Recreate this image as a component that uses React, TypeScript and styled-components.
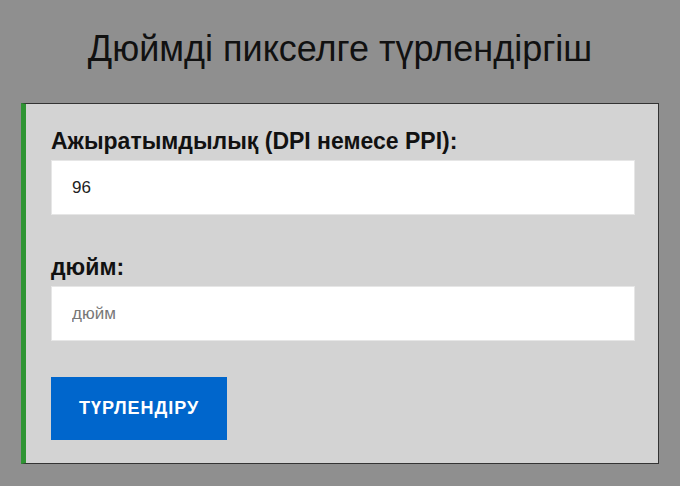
import React, { useState } from 'react';
import styled, { createGlobalStyle } from 'styled-components';

const GlobalStyle = createGlobalStyle`
    html, body {
        margin: 0;
        padding: 0;
        background: #8f8f8f;
        font-family: "Liberation Sans", Arial, sans-serif;
    }
`;

const SPage = styled.div`
    padding: 28px 21px 22px 21px;
`;

const STitle = styled.h1`
    margin: 0 0 34px 0;
    text-align: center;
    font-size: 36px;
    font-weight: normal;
    line-height: 41px;
    color: #111;
`;

const SPanel = styled.form`
    display: flex;
    flex-direction: column;
    align-items: flex-start;
    background: #d3d3d3;
    border: 1px solid #333;
    border-left: 5px solid #2f9433;
    padding: 24px 23px 23px 25px;
`;

const SField = styled.div<{ $gap: number }>`
    display: flex;
    flex-direction: column;
    width: 100%;
    margin-bottom: ${(p) => p.$gap}px;
`;

const SLabel = styled.label`
    font-size: 23px;
    font-weight: bold;
    line-height: 26px;
    color: #111;
    margin-bottom: 6px;
`;

const SInput = styled.input`
    box-sizing: border-box;
    width: 100%;
    height: 55px;
    padding: 0 20px;
    border: 1px solid #e6e6e6;
    background: #fff;
    font-family: "Liberation Sans", Arial, sans-serif;
    font-size: 17px;
    color: #222;
    outline: none;

    &::placeholder {
        color: #777;
    }
`;

const SButton = styled.button`
    height: 63px;
    padding: 0 28px;
    border: none;
    background: #0066cc;
    color: #fff;
    font-family: "Liberation Sans", Arial, sans-serif;
    font-size: 18px;
    font-weight: bold;
    letter-spacing: 1px;
    cursor: pointer;
`;

const App = (): JSX.Element => {
    const [dpi, setDpi] = useState('96');
    const [inch, setInch] = useState('');
    return (
        <>
            <GlobalStyle />
            <SPage>
                <STitle>Дюймді пикселге түрлендіргіш</STitle>
                <SPanel onSubmit={(e): void => { e.preventDefault(); }}>
                    <SField $gap={39}>
                        <SLabel>Ажыратымдылық (DPI немесе PPI):</SLabel>
                        <SInput value={dpi} onChange={(e): void => { setDpi(e.target.value); }} />
                    </SField>
                    <SField $gap={36}>
                        <SLabel>дюйм:</SLabel>
                        <SInput placeholder="дюйм" value={inch} onChange={(e): void => { setInch(e.target.value); }} />
                    </SField>
                    <SButton type="submit">ТҮРЛЕНДІРУ</SButton>
                </SPanel>
            </SPage>
        </>
    );
};

export default App;
